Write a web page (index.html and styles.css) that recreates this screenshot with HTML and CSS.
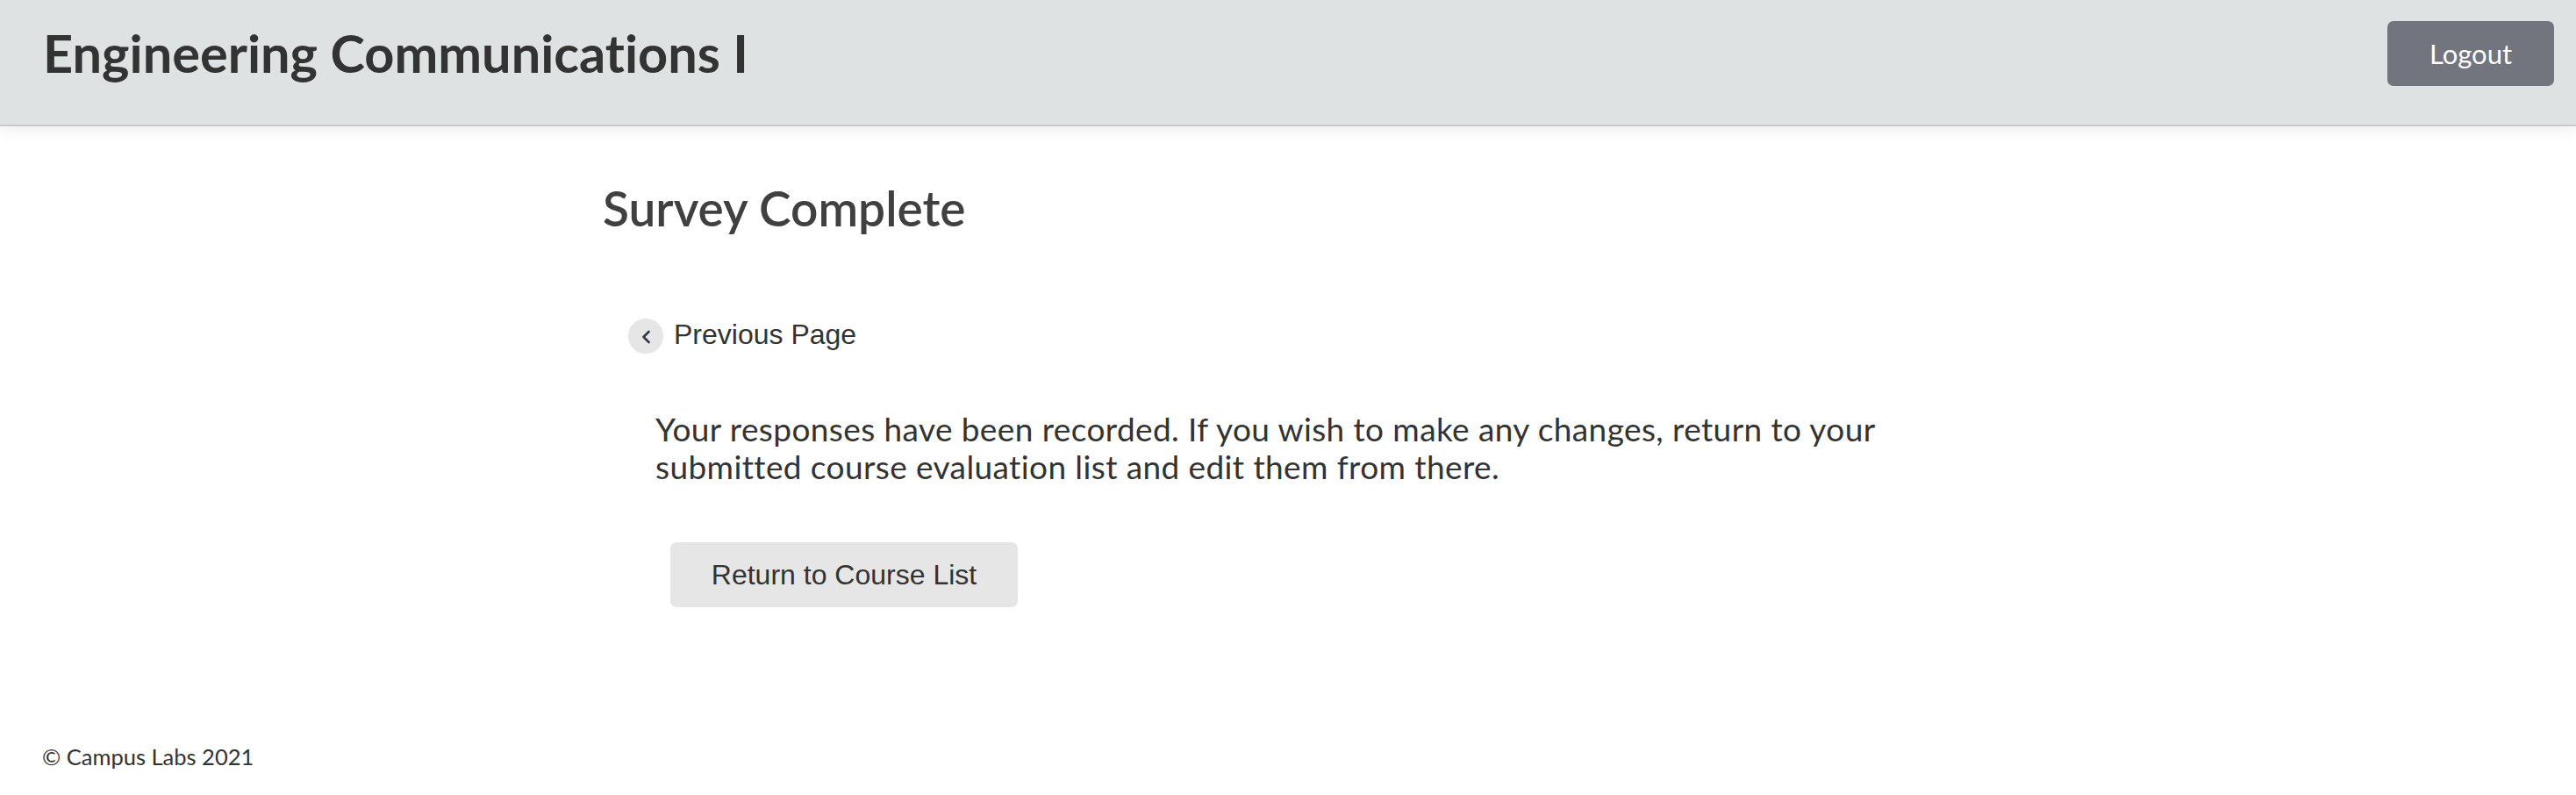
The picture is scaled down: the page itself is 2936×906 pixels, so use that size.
FILE: index.html
```html
<!DOCTYPE html>
<html lang="en">
<head>
<meta charset="utf-8">
<title>Survey Complete</title>
<link rel="stylesheet" href="styles.css">
</head>
<body>
<header class="topbar">
  <h1 class="course-title">Engineering Communications I</h1>
  <button class="logout-btn" type="button">Logout</button>
</header>
<main class="container">
  <h2 class="page-title">Survey Complete</h2>
  <a class="prev-link" href="#">
    <span class="prev-icon"><svg width="40" height="40" viewBox="0 0 40 40"><polyline points="23.5,15 17.5,21 23.5,27" fill="none" stroke="#2c3a4a" stroke-width="2.6" stroke-linecap="round" stroke-linejoin="round"/></svg></span>
    <span class="prev-text">Previous Page</span>
  </a>
  <p class="message">Your responses have been recorded. If you wish to make any changes, return to your submitted course evaluation list and edit them from there.</p>
  <button class="return-btn" type="button">Return to Course List</button>
</main>
<footer class="site-footer">© Campus Labs 2021</footer>
</body>
</html>
```

FILE: styles.css
```css
html, body {
  margin: 0;
  padding: 0;
  background: #ffffff;
}
body {
  font-family: Lato, "Open Sans", sans-serif;
  font-variant-ligatures: none;
  color: #333333;
}
.topbar {
  height: 122px;
  padding: 0 25px 20px 49px;
  background: #dfe2e3;
  border-bottom: 2px solid #c9cbcd;
  box-shadow: 0 4px 16px rgba(0, 0, 0, 0.07);
  display: flex;
  align-items: center;
  justify-content: space-between;
}
.course-title {
  margin: 0;
  font-size: 59.5px;
  line-height: 1.2;
  font-weight: 700;
  color: #333333;
  letter-spacing: 0;
}
.logout-btn {
  width: 190px;
  height: 74px;
  border: 0;
  border-radius: 7px;
  background: #72757d;
  color: #ffffff;
  font-family: Lato, "Open Sans", sans-serif;
  font-size: 31px;
  padding: 0;
}
.container {
  width: 1562px;
  margin: 0 auto;
  display: flex;
  flex-direction: column;
  align-items: flex-start;
}
.page-title {
  margin: 60px 0 0 0;
  font-size: 55px;
  line-height: 1.2;
  font-weight: 600;
  color: #404040;
}
.prev-link {
  margin: 93px 0 0 29px;
  display: flex;
  align-items: center;
  gap: 12px;
  text-decoration: none;
  color: #333333;
}
.prev-icon {
  width: 40px;
  height: 40px;
  border-radius: 50%;
  background: #e6e6e6;
  display: block;
}
.prev-icon svg {
  display: block;
}
.prev-text {
  font-family: "Liberation Sans", Arial, sans-serif;
  font-size: 32px;
  margin-bottom: 3px;
}
.message {
  margin: 64px 0 0 60px;
  max-width: 1440px;
  font-size: 37px;
  letter-spacing: 0.4px;
  line-height: 43px;
  color: #333333;
}
.return-btn {
  margin: 65px 0 0 77px;
  width: 396px;
  height: 74px;
  border: 0;
  border-radius: 7px;
  background: #e6e6e6;
  color: #333333;
  font-family: "Liberation Sans", Arial, sans-serif;
  font-size: 32px;
  padding: 0;
}
.site-footer {
  margin: 155px 0 0 48px;
  font-size: 25.5px;
  line-height: 30px;
  color: #333333;
}
```
